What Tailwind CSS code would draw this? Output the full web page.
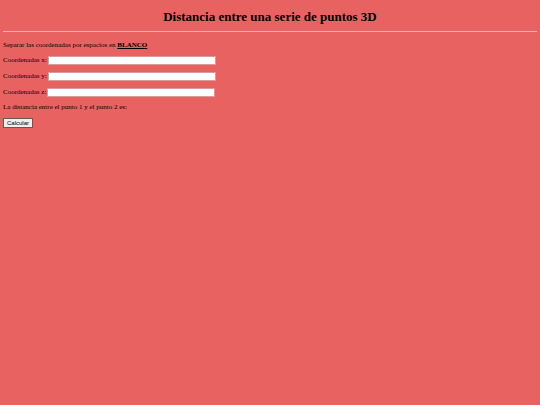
<!DOCTYPE html>
<html lang="es">
<head>
    <meta charset="UTF-8">
    <meta name="viewport" content="width=device-width, initial-scale=1.0">
    <title>Distancia entre puntos 3D</title>
    <script src="https://cdn.jsdelivr.net/npm/@tailwindcss/browser@4"></script>
</head>
<body class="min-h-screen bg-[#e96262] px-[3px] pt-2 font-['Liberation_Serif',serif] text-[7px] leading-[9px] text-black">
    <h1 class="text-center text-[13px] leading-[18px] font-bold">Distancia entre una serie de puntos 3D</h1>
    <hr class="mt-[5px] border-t border-[#eeb0b0]">

    <p class="mt-[9px]">Separar las coordenadas por espacios en <b><u>BLANCO</u></b></p>

    <!-- Formulario -->
    <form class="mt-[6px]">
        <div class="flex flex-col gap-[7px]">
            <div class="flex items-center gap-px">
                <label for="x">Coordenadas x:</label>
                <input id="x" type="text" class="h-[9px] w-[168px] border border-[#d99a9a] bg-white px-px">
            </div>
            <div class="flex items-center gap-px">
                <label for="y">Coordenadas y:</label>
                <input id="y" type="text" class="h-[9px] w-[168px] border border-[#d99a9a] bg-white px-px">
            </div>
            <div class="flex items-center gap-px">
                <label for="z">Coordenadas z:</label>
                <input id="z" type="text" class="h-[9px] w-[168px] border border-[#d99a9a] bg-white px-px">
            </div>
        </div>

        <p class="mt-[6px]">La distancia entre el punto 1 y el punto 2 es: <span id="resultado"></span></p>

        <button type="button" onclick="calcular()" class="mt-[6px] block h-[10px] border border-[#6b5555] bg-[#efefef] px-[3px] font-['Liberation_Sans',sans-serif] text-[6px] leading-[8px]">Calcular</button>
    </form>

    <script>
        // Lee los numeros de un campo separados por espacios
        function leer(id) {
            return document.getElementById(id).value.trim().split(/\s+/).map(Number);
        }

        function calcular() {
            const x = leer('x'), y = leer('y'), z = leer('z');
            const d = Math.hypot(x[1] - x[0], y[1] - y[0], z[1] - z[0]);
            document.getElementById('resultado').textContent = isNaN(d) ? '' : d.toFixed(2);
        }
    </script>
</body>
</html>
